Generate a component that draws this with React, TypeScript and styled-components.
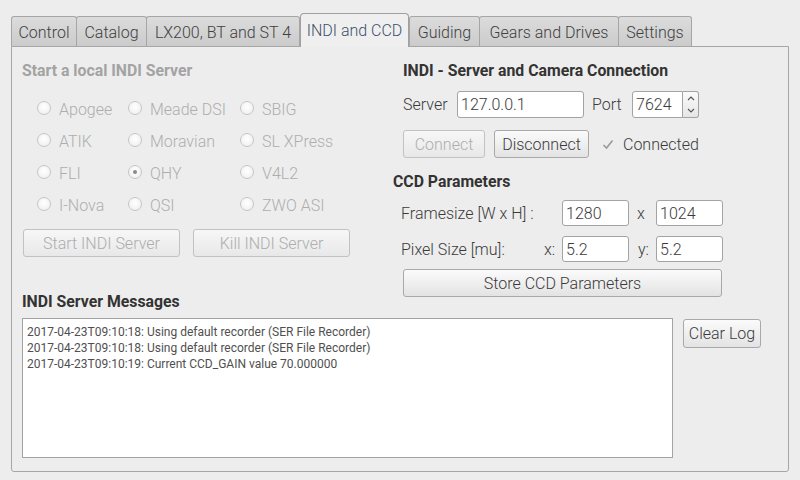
import React from "react";
import styled, { createGlobalStyle, css } from "styled-components";

const Global = createGlobalStyle`
  html, body { margin: 0; padding: 0; background: #ededed; }
  body { font-family: Roboto, "Liberation Sans", sans-serif; color: #3c3c3c; }
  * { box-sizing: border-box; }
`;

const Window = styled.div`
  width: 800px;
  height: 480px;
  padding-top: 13px;
  background: #ededed;
  overflow: hidden;
`;

const TabBar = styled.div`
  display: flex;
  align-items: flex-end;
  height: 33px;
  margin-left: 11px;
`;

const Tab = styled.div<{ $w: number; $active?: boolean }>`
  width: ${(p) => p.$w}px;
  height: 30px;
  margin-right: -1px;
  padding-top: 2px;
  display: flex;
  align-items: center;
  justify-content: center;
  font-size: 16px;
  font-weight: 300;
  color: #404040;
  border: 1px solid #a6a6a6;
  border-bottom: none;
  border-radius: 3px 3px 0 0;
  background: linear-gradient(#dcdcdc, #cbcbcb);
  ${(p) =>
    p.$active &&
    css`
      height: 34px;
      margin-bottom: -1px;
      padding-top: 0;
      padding-bottom: 1px;
      position: relative;
      z-index: 1;
      background: #efefef;
      color: #3d4f6b;
      border-color: #a0a0a0;
      border-radius: 4px 4px 0 0;
      margin-left: 1px;
      margin-right: 0;
    `}
`;

const Pane = styled.div`
  margin-left: 11px;
  width: 778px;
  height: 426px;
  border: 1px solid #a6a6a6;
  border-radius: 0 0 3px 3px;
  background: #ededed;
  padding: 14px 0 0 10px;
  display: grid;
  grid-template-columns: 370px 1fr;
  grid-template-rows: auto auto auto;
  grid-template-areas:
    "left right"
    "msgs right"
    "bottom bottom";
  align-items: start;
  align-content: start;
`;

const LeftCol = styled.div`
  grid-area: left;
`;

const RightCol = styled.div`
  grid-area: right;
`;

const Heading = styled.div<{ $disabled?: boolean; $indent?: number; $mt?: number }>`
  font-size: 15.8px;
  font-weight: 700;
  line-height: 20px;
  height: 20px;
  color: ${(p) => (p.$disabled ? "#a3a3a3" : "#333")};
  padding-left: ${(p) => p.$indent ?? 0}px;
  margin-top: ${(p) => p.$mt ?? 0}px;
  white-space: nowrap;
`;

const MsgHeading = styled(Heading)`
  grid-area: msgs;
  margin-top: 35px;
`;

const RadioGrid = styled.div`
  margin-top: 12px;
  padding-left: 15px;
  display: grid;
  grid-template-columns: 91px 112px 1fr;
  grid-auto-rows: 32px;
`;

const RadioItem = styled.div`
  display: flex;
  align-items: center;
  gap: 8px;
  font-size: 16px;
  font-weight: 300;
  color: #adadad;
  white-space: nowrap;
`;

const RadioCircle = styled.span<{ $checked?: boolean }>`
  width: 14px;
  height: 14px;
  border-radius: 50%;
  border: 1px solid #c6c6c6;
  background: radial-gradient(circle at 50% 40%, #ffffff, #ececec);
  display: flex;
  align-items: center;
  justify-content: center;
  margin-top: -3px;
  &::after {
    content: "";
    width: 4px;
    height: 4px;
    border-radius: 50%;
    background: ${(p) => (p.$checked ? "#8a8a8a" : "transparent")};
  }
`;

const Button = styled.button<{ $w: number; $h?: number }>`
  width: ${(p) => p.$w}px;
  height: ${(p) => p.$h ?? 28}px;
  font-family: Roboto, "Liberation Sans", sans-serif;
  font-size: 16px;
  font-weight: 300;
  color: #3a3a3a;
  border: 1px solid #a9a9a9;
  border-radius: 3px;
  background: linear-gradient(#fbfbfb, #e3e3e3);
  padding: 0;
  display: flex;
  align-items: center;
  justify-content: center;
  &:disabled {
    color: #adadad;
    border-color: #c2c2c2;
    background: linear-gradient(#f7f7f7, #e8e8e8);
  }
`;

const ButtonRow = styled.div<{ $mt: number; $gap: number }>`
  display: flex;
  align-items: center;
  margin-top: ${(p) => p.$mt}px;
  gap: ${(p) => p.$gap}px;
`;

const LeftButtons = styled(ButtonRow)`
  padding-left: 1px;
`;

const Indented = styled.div<{ $pl: number }>`
  padding-left: ${(p) => p.$pl}px;
`;

const FieldRow = styled.div<{ $mt: number }>`
  display: flex;
  align-items: center;
  margin-top: ${(p) => p.$mt}px;
  height: 27px;
`;

const Label = styled.span<{ $w?: number; $ml?: number }>`
  font-size: 16px;
  font-weight: 300;
  color: #3a3a3a;
  white-space: nowrap;
  width: ${(p) => (p.$w ? `${p.$w}px` : "auto")};
  margin-left: ${(p) => p.$ml ?? 0}px;
  flex: none;
`;

const Input = styled.div<{ $w: number; $h?: number; $radius?: string }>`
  width: ${(p) => p.$w}px;
  height: ${(p) => p.$h ?? 27}px;
  border: 1px solid #a3a3a3;
  border-radius: ${(p) => p.$radius ?? "3px"};
  background: #fff;
  font-size: 16px;
  font-weight: 300;
  color: #3a3a3a;
  display: flex;
  align-items: center;
  padding-left: 3px;
  flex: none;
`;

const SpinArrows = styled.div`
  width: 16px;
  height: 27px;
  border: 1px solid #a3a3a3;
  border-left: none;
  border-radius: 0 3px 3px 0;
  background: linear-gradient(#fbfbfb, #e6e6e6);
  display: grid;
  grid-template-rows: 1fr 1fr;
  justify-items: center;
  align-items: center;
  flex: none;
`;

const CheckWrap = styled.span`
  display: flex;
  align-items: center;
  margin-left: 4px;
  gap: 9px;
  font-size: 16px;
  font-weight: 300;
  color: #3a3a3a;
`;

const CCDGrid = styled.div`
  margin-top: 8px;
  padding-left: 9px;
  display: grid;
  grid-template-columns: 143px 18px 67px 27px 67px;
  grid-auto-rows: 26px;
  row-gap: 10px;
  align-items: center;
`;

const Sep = styled.span<{ $pl?: number }>`
  font-size: 16px;
  font-weight: 300;
  color: #3a3a3a;
  padding-left: ${(p) => p.$pl ?? 0}px;
`;

const Bottom = styled.div`
  grid-area: bottom;
  display: flex;
  align-items: flex-start;
  margin-top: 6px;
`;

const LogBox = styled.div`
  width: 651px;
  height: 140px;
  background: #fff;
  border: 1px solid #a3a3a3;
  padding: 5px 0 0 4px;
  font-size: 12px;
  font-weight: 400;
  line-height: 16px;
  color: #4f4f4f;
`;

const LogLine = styled.div`
  white-space: nowrap;
`;

const ClearBtn = styled(Button)`
  margin-left: 10px;
  margin-top: 1px;
`;

const tabs: [string, number, boolean?][] = [
  ["Control", 66],
  ["Catalog", 71],
  ["LX200, BT and ST 4", 154],
  ["INDI and CCD", 109, true],
  ["Guiding", 71],
  ["Gears and Drives", 140],
  ["Settings", 74],
];

const drivers: [string, boolean?][] = [
  ["Apogee"], ["Meade DSI"], ["SBIG"],
  ["ATIK"], ["Moravian"], ["SL XPress"],
  ["FLI"], ["QHY", true], ["V4L2"],
  ["I-Nova"], ["QSI"], ["ZWO ASI"],
];

const logs = [
  "2017-04-23T09:10:18: Using default recorder (SER File Recorder)",
  "2017-04-23T09:10:18: Using default recorder (SER File Recorder)",
  "2017-04-23T09:10:19: Current CCD_GAIN value 70.000000",
];

export default function App() {
  return (
    <Window>
      <Global />
      <TabBar>
        {tabs.map(([t, w, a]) => (
          <Tab key={t} $w={w} $active={a}>
            {t}
          </Tab>
        ))}
      </TabBar>
      <Pane>
        <LeftCol>
          <Heading $disabled>Start a local INDI Server</Heading>
          <RadioGrid>
            {drivers.map(([d, c]) => (
              <RadioItem key={d}>
                <RadioCircle $checked={c} />
                {d}
              </RadioItem>
            ))}
          </RadioGrid>
          <LeftButtons $mt={8} $gap={13}>
            <Button $w={157} disabled>
              Start INDI Server
            </Button>
            <Button $w={157} disabled>
              Kill INDI Server
            </Button>
          </LeftButtons>
        </LeftCol>
        <RightCol>
          <Heading $indent={11}>INDI - Server and Camera Connection</Heading>
          <Indented $pl={11}>
            <FieldRow $mt={10}>
              <Label $w={54}>Server</Label>
              <Input $w={127}>127.0.0.1</Input>
              <Label $w={40} $ml={8}>
                Port
              </Label>
              <Input $w={51} $radius="3px 0 0 3px">7624</Input>
              <SpinArrows>
                <svg width="8" height="5" viewBox="0 0 8 5">
                  <path d="M1 4 L4 1 L7 4" fill="none" stroke="#555" strokeWidth="1.1" />
                </svg>
                <svg width="8" height="5" viewBox="0 0 8 5">
                  <path d="M1 1 L4 4 L7 1" fill="none" stroke="#555" strokeWidth="1.1" />
                </svg>
              </SpinArrows>
            </FieldRow>
            <ButtonRow $mt={12} $gap={9}>
              <Button $w={82} disabled>
                Connect
              </Button>
              <Button $w={95}>Disconnect</Button>
              <CheckWrap>
                <svg width="12" height="11" viewBox="0 0 12 11">
                  <path d="M1.5 6 L4.5 9 L10.5 1.5" fill="none" stroke="#9a9a9a" strokeWidth="1.6" />
                </svg>
                Connected
              </CheckWrap>
            </ButtonRow>
          </Indented>
          <Heading $mt={14} $indent={1}>
            CCD Parameters
          </Heading>
          <CCDGrid>
            <Label>Framesize [W x H] :</Label>
            <span />
            <Input $w={67} $h={26}>1280</Input>
            <Sep $pl={8}>x</Sep>
            <Input $w={67} $h={26}>1024</Input>
            <Label>Pixel Size [mu]:</Label>
            <Sep>x:</Sep>
            <Input $w={67} $h={26}>5.2</Input>
            <Sep $pl={9}>y:</Sep>
            <Input $w={67} $h={26}>5.2</Input>
          </CCDGrid>
          <Indented $pl={11}>
            <ButtonRow $mt={7} $gap={0}>
              <Button $w={319}>Store CCD Parameters</Button>
            </ButtonRow>
          </Indented>
        </RightCol>
        <MsgHeading>INDI Server Messages</MsgHeading>
        <Bottom>
          <LogBox>
            {logs.map((l, i) => (
              <LogLine key={i}>{l}</LogLine>
            ))}
          </LogBox>
          <ClearBtn $w={78} $h={29}>
            Clear Log
          </ClearBtn>
        </Bottom>
      </Pane>
    </Window>
  );
}
